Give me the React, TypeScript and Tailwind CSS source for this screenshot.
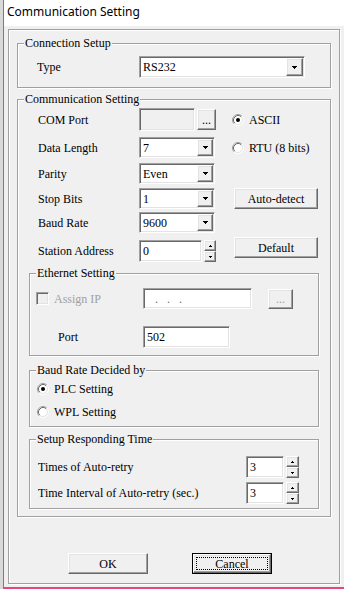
import React from "react";

const etched =
  "border border-[#a0a0a0] shadow-[inset_1px_1px_0_#ffffff,1px_1px_0_#ffffff]";
const sunken =
  "border border-t-[#a0a0a0] border-l-[#a0a0a0] border-r-white border-b-white shadow-[inset_1px_1px_0_#696969,inset_-1px_-1px_0_#e3e3e3]";
const raised =
  "border border-t-white border-l-white border-r-[#696969] border-b-[#696969] shadow-[inset_-1px_-1px_0_#a0a0a0,inset_1px_1px_0_#e3e3e3] bg-[#f0f0f0]";

function Group({
  label,
  className,
  children,
}: {
  label: string;
  className: string;
  children?: React.ReactNode;
}) {
  return (
    <div className={`relative shrink-0 ${etched} ${className}`}>
      <span className="absolute -top-[8px] left-[6px] bg-[#f0f0f0] px-[1px] leading-[14px] whitespace-nowrap">
        {label}
      </span>
      {children}
    </div>
  );
}

function DownArrow() {
  return (
    <svg width="5" height="3" viewBox="0 0 5 3" shapeRendering="crispEdges">
      <rect x="0" y="0" width="5" height="1" fill="#000" />
      <rect x="1" y="1" width="3" height="1" fill="#000" />
      <rect x="2" y="2" width="1" height="1" fill="#000" />
    </svg>
  );
}

function TinyArrow({ up }: { up?: boolean }) {
  return (
    <svg width="3" height="2" viewBox="0 0 3 2" shapeRendering="crispEdges">
      {up ? (
        <>
          <rect x="1" y="0" width="1" height="1" fill="#000" />
          <rect x="0" y="1" width="3" height="1" fill="#000" />
        </>
      ) : (
        <>
          <rect x="0" y="0" width="3" height="1" fill="#000" />
          <rect x="1" y="1" width="1" height="1" fill="#000" />
        </>
      )}
    </svg>
  );
}

function Combo({
  className,
  btn,
  value,
}: {
  className: string;
  btn: string;
  value: string;
}) {
  return (
    <div className={`${sunken} bg-white p-[1px] flex shrink-0 ${className}`}>
      <span className="flex-1 pl-[2px] flex items-center leading-none">{value}</span>
      <div className={`${raised} ${btn} h-full flex items-center justify-center`}>
        <DownArrow />
      </div>
    </div>
  );
}

function Spinner({ className }: { className: string }) {
  return (
    <div className={`flex flex-col shrink-0 ${className}`}>
      <div className={`${raised} flex-1 flex items-center justify-center`}>
        <TinyArrow up />
      </div>
      <div className={`${raised} flex-1 flex items-center justify-center`}>
        <TinyArrow />
      </div>
    </div>
  );
}

function Radio({ checked }: { checked?: boolean }) {
  return (
    <svg width="12" height="12" viewBox="0 0 12 12" className="shrink-0">
      <circle cx="6" cy="6" r="5" fill="#fff" />
      <path d="M2.11 9.89 A5.5 5.5 0 0 1 9.89 2.11" fill="none" stroke="#a0a0a0" />
      <path d="M9.89 2.11 A5.5 5.5 0 0 1 2.11 9.89" fill="none" stroke="#ffffff" />
      <path d="M2.82 9.18 A4.5 4.5 0 0 1 9.18 2.82" fill="none" stroke="#696969" />
      <path d="M9.18 2.82 A4.5 4.5 0 0 1 2.82 9.18" fill="none" stroke="#e3e3e3" />
      {checked ? <circle cx="6" cy="6" r="2" fill="#000" /> : null}
    </svg>
  );
}

export default function App() {
  return (
    <div className="w-[344px] h-[589px] flex overflow-hidden bg-[#dcdcdc] font-['Liberation_Serif',serif] text-[12px] text-black">
      <div className="w-[3px] shrink-0 bg-[#d9d9d9]" />
      <div className="w-[341px] h-[589px] shrink-0 flex flex-col border-l border-b-2 border-[#e8457c]">
        <div className="h-[26px] shrink-0 bg-white pl-[3px] pb-[2px] flex items-center font-['Noto_Sans',sans-serif] text-[12px]">
          Communication Setting
        </div>
        <div className="flex-1 bg-[#f0f0f0] pl-[4px] pt-[3px]">
          <div className={`w-[332px] h-[555px] ${etched} flex flex-col`}>
            <Group label="Connection Setup" className="ml-[8px] mt-[13px] w-[314px] h-[45px]">
              <div className="flex items-center mt-[12px] pl-[19px] h-[22px]">
                <span className="w-[102px] shrink-0">Type</span>
                <Combo className="w-[166px] h-[22px]" btn="w-[17px]" value="RS232" />
              </div>
            </Group>

            <Group label="Communication Setting" className="ml-[8px] mt-[11px] w-[314px] h-[418px] flex flex-col">
              <div className="flex items-center mt-[8px] h-[23px] pl-[20px]">
                <span className="w-[101px] shrink-0">COM Port</span>
                <div className={`${sunken} w-[56px] h-[23px] bg-[#f0f0f0] shrink-0`} />
                <div className={`${raised} ml-[2px] w-[19px] h-[21px] flex items-end justify-center pb-[3px] leading-none shrink-0`}>
                  ...
                </div>
                <div className="ml-[16px] flex items-center">
                  <Radio checked />
                  <span className="ml-[5px]">ASCII</span>
                </div>
              </div>

              <div className="flex items-center mt-[6px] h-[21px] pl-[20px]">
                <span className="w-[101px] shrink-0">Data Length</span>
                <Combo className="w-[76px] h-[21px]" btn="w-[16px]" value="7" />
                <div className="ml-[17px] flex items-center">
                  <Radio />
                  <span className="ml-[5px]">RTU (8 bits)</span>
                </div>
              </div>

              <div className="flex items-center mt-[5px] h-[21px] pl-[20px]">
                <span className="w-[101px] shrink-0">Parity</span>
                <Combo className="w-[76px] h-[21px]" btn="w-[16px]" value="Even" />
              </div>

              <div className="flex items-center mt-[4px] h-[21px] pl-[20px]">
                <span className="w-[101px] shrink-0">Stop Bits</span>
                <Combo className="w-[76px] h-[21px]" btn="w-[16px]" value="1" />
                <div className={`${raised} ml-[19px] w-[84px] h-[21px] flex items-center justify-center`}>
                  Auto-detect
                </div>
              </div>

              <div className="flex items-center mt-[3px] h-[21px] pl-[20px]">
                <span className="w-[101px] shrink-0">Baud Rate</span>
                <Combo className="w-[76px] h-[21px]" btn="w-[16px]" value="9600" />
              </div>

              <div className="flex items-start mt-[4px] h-[25px] pl-[20px]">
                <div className="flex items-center mt-[3px] h-[22px]">
                  <span className="w-[101px] shrink-0">Station Address</span>
                  <div className={`${sunken} w-[63px] h-[22px] bg-white pl-[3px] flex items-center shrink-0`}>0</div>
                  <Spinner className="ml-[2px] w-[12px] h-[22px]" />
                </div>
                <div className={`${raised} ml-[18px] w-[84px] h-[21px] flex items-center justify-center`}>
                  Default
                </div>
              </div>

              <Group label="Ethernet Setting" className="ml-[11px] mt-[11px] w-[290px] h-[83px]">
                <div className="flex items-center mt-[14px] h-[21px]">
                  <div className="w-[113px] shrink-0 flex items-center pl-[6px]">
                    <div className={`${sunken} w-[13px] h-[13px] bg-[#f0f0f0] shrink-0`} />
                    <span className="ml-[5px] text-[#a0a0a0]">Assign IP</span>
                  </div>
                  <div className={`${sunken} w-[109px] h-[21px] bg-white flex items-center shrink-0`}>
                    <span className="pl-[11px] tracking-[9px] text-[#6d6d6d] leading-none">...</span>
                  </div>
                  <div className={`${raised} ml-[16px] w-[25px] h-[20px] flex items-end justify-center pb-[3px] leading-none text-[#a0a0a0]`}>
                    ...
                  </div>
                </div>
                <div className="flex items-center mt-[17px] h-[22px] pl-[28px]">
                  <span className="w-[85px] shrink-0">Port</span>
                  <div className={`${sunken} w-[87px] h-[22px] bg-white pl-[3px] flex items-center`}>502</div>
                </div>
              </Group>

              <Group label="Baud Rate Decided by" className="ml-[11px] mt-[14px] w-[290px] h-[57px]">
                <div className="flex items-center mt-[10px] h-[16px] pl-[7px]">
                  <Radio checked />
                  <span className="ml-[5px]">PLC Setting</span>
                </div>
                <div className="flex items-center mt-[7px] h-[16px] pl-[7px]">
                  <Radio />
                  <span className="ml-[5px]">WPL Setting</span>
                </div>
              </Group>

              <Group label="Setup Responding Time" className="ml-[11px] mt-[12px] w-[290px] h-[70px]">
                <div className="flex items-center mt-[16px] h-[22px] pl-[8px]">
                  <span className="w-[208px] shrink-0">Times of Auto-retry</span>
                  <div className={`${sunken} w-[38px] h-[22px] bg-white pl-[3px] flex items-center`}>3</div>
                  <Spinner className="ml-[2px] w-[13px] h-[22px]" />
                </div>
                <div className="flex items-center mt-[4px] h-[22px] pl-[8px]">
                  <span className="w-[208px] shrink-0">Time Interval of Auto-retry (sec.)</span>
                  <div className={`${sunken} w-[38px] h-[22px] bg-white pl-[3px] flex items-center`}>3</div>
                  <Spinner className="ml-[2px] w-[13px] h-[22px]" />
                </div>
              </Group>
            </Group>

            <div className="flex mt-[36px] pl-[59px]">
              <div className={`${raised} w-[80px] h-[21px] flex items-center justify-center`}>OK</div>
              <div className="ml-[44px] w-[80px] h-[21px] border border-black flex">
                <div className={`${raised} flex-1 p-[2px] flex`}>
                  <div className="flex-1 border border-dotted border-black flex items-center justify-center leading-none">
                    Cancel
                  </div>
                </div>
              </div>
            </div>
          </div>
        </div>
      </div>
    </div>
  );
}
